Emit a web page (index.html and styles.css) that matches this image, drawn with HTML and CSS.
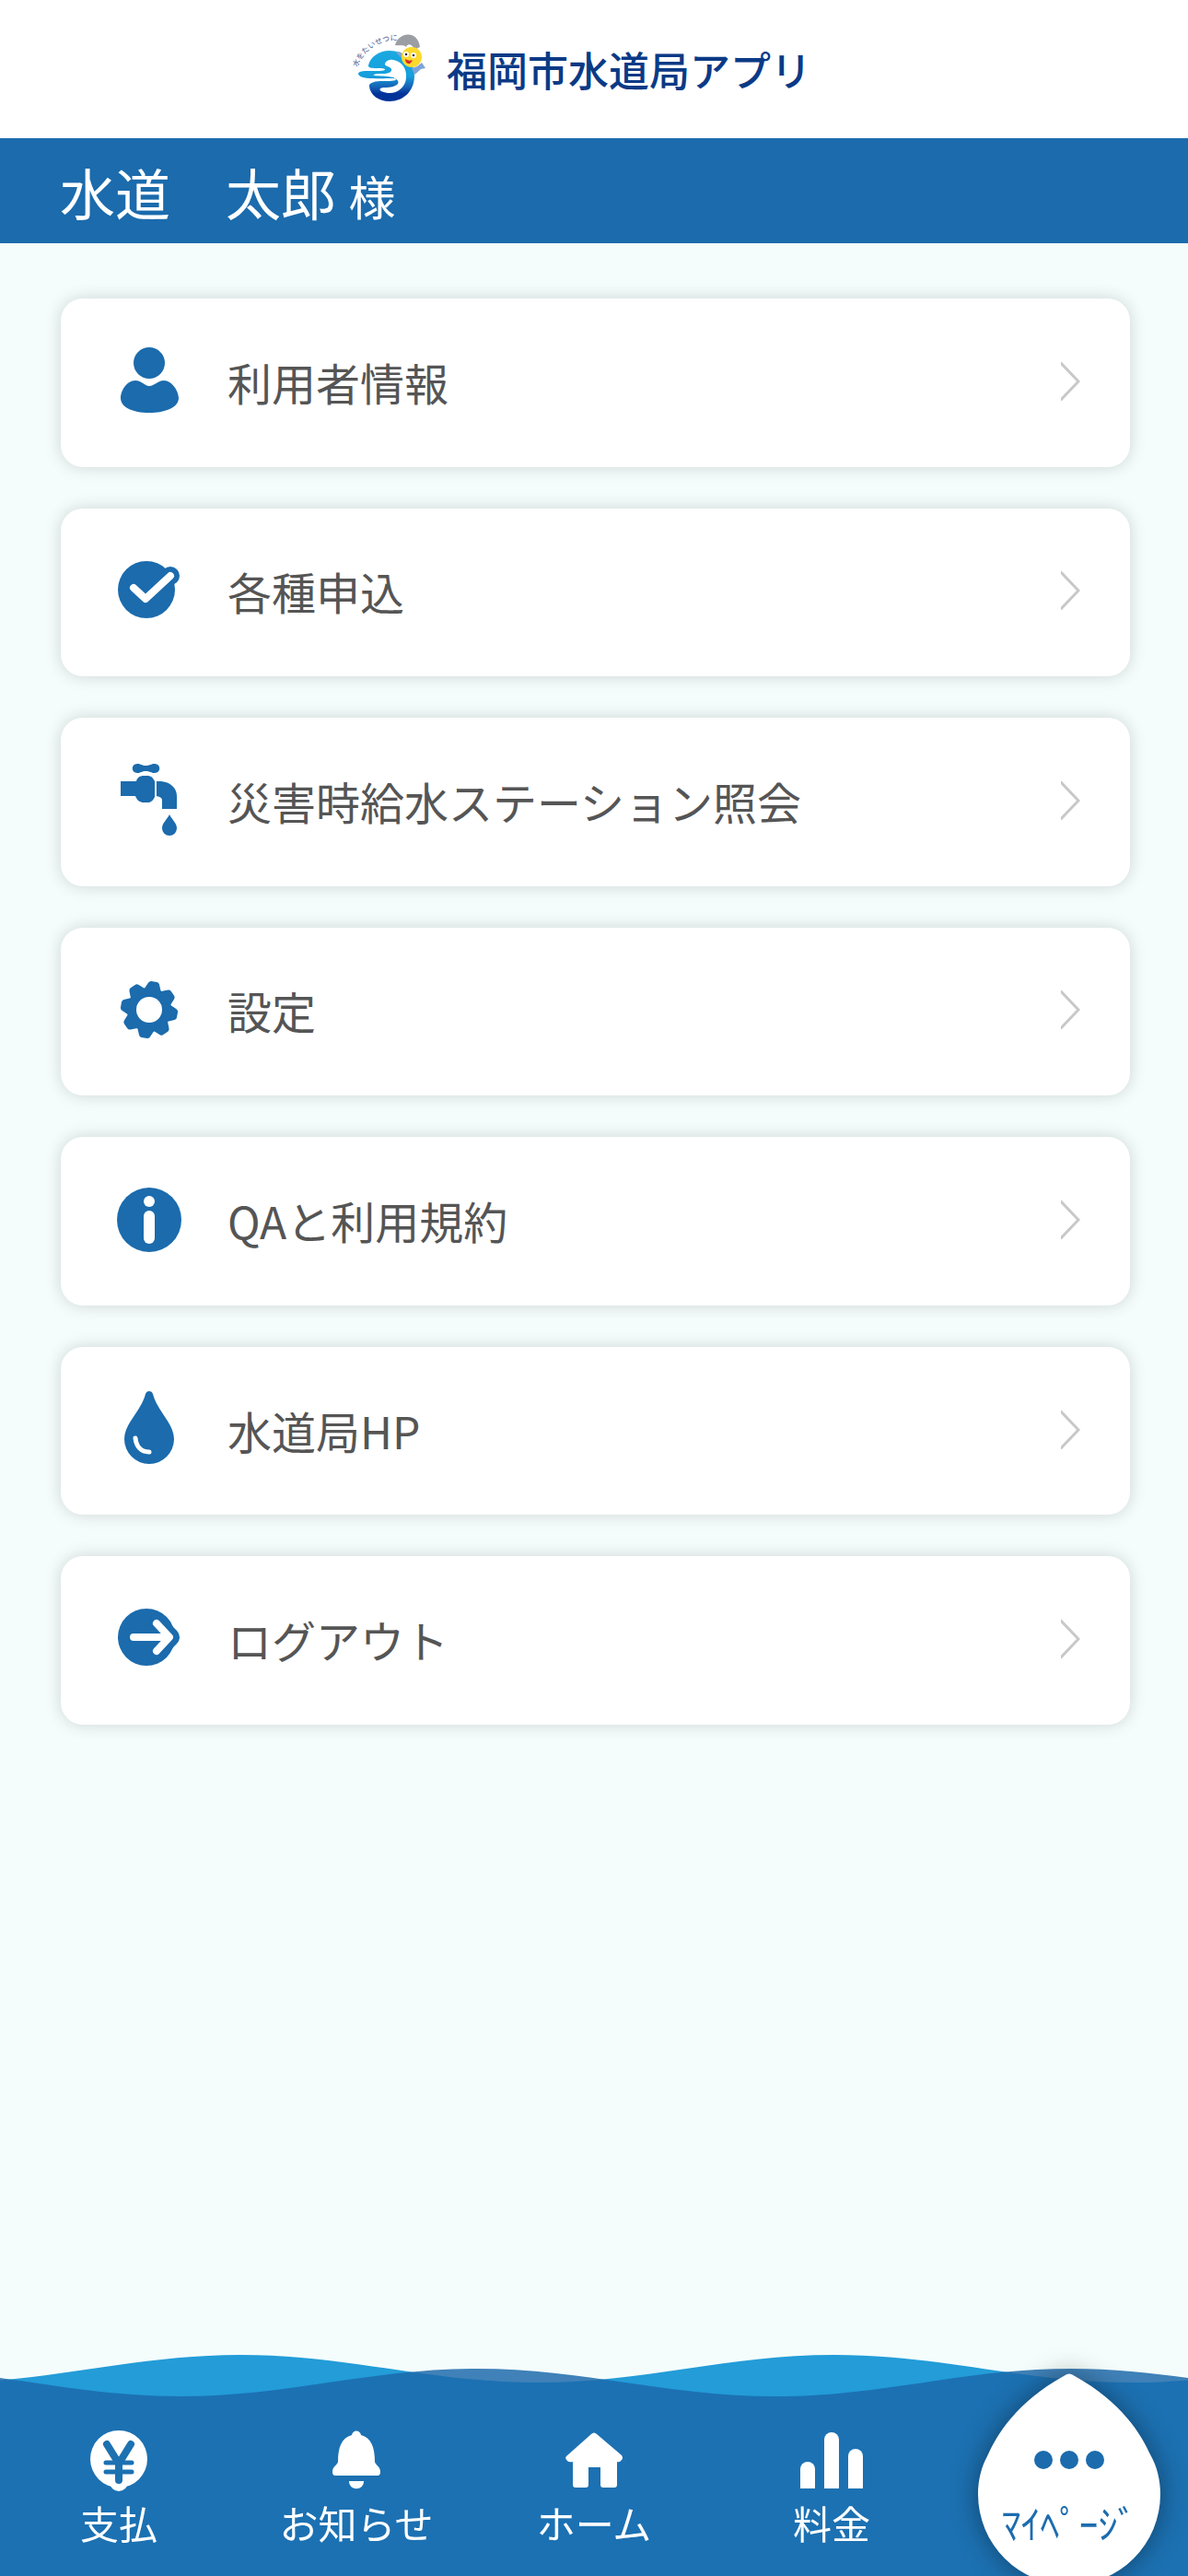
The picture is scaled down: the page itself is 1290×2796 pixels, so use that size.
FILE: index.html
```html
<!DOCTYPE html>
<html lang="ja">
<head>
    <meta charset="UTF-8">
    <meta name="viewport" content="width=device-width, initial-scale=1.0">
    <title>福岡市水道局アプリ</title>
    <link rel="stylesheet" href="styles.css">
</head>
<body>
    <header class="header">
        <svg class="logo" viewBox="0 -4 90 90" aria-hidden="true">
            <defs>
                <linearGradient id="ring" x1="0" y1="0" x2="0" y2="1">
                    <stop offset="0" stop-color="#1ba9e1"/>
                    <stop offset="0.5" stop-color="#159fdc"/>
                    <stop offset="0.72" stop-color="#1560b4"/>
                    <stop offset="0.85" stop-color="#003399"/>
                </linearGradient>
                <path id="arc" d="M7 39 A44 44 0 0 1 51 10"/>
            </defs>
            <text class="logo-text"><textPath href="#arc">水をたいせつに</textPath></text>
            <path fill="url(#ring)" d="M19 37 C21 28 30 21 42 21 C58 21 69 33 69 48 C69 65 57 76 42 76 C30 76 21 69 20 60 C19 55 28 54 34 54 C42 54 49 54 49 52 C49 50 35 52 24 51 C14 51 8 49 8 46 C8 42 20 43 30 43 C34 43 38 42 37 41 C35 39 18 42 19 37 Z"/>
            <path fill="#fff" d="M46 31 C56 33 61 41 60 51 C59 61 50 68 40 67 C34 66 30 64 32 62 C35 60 42 62 48 59 C53 57 53 53 46 50 C38 48 31 49 26 48 C22 47 27 46 34 46 C41 46 45 44 44 41 C43 38 36 38 37 35 C38 32 42 30 46 31 Z"/>
            <path fill="#9b9ea3" d="M48 15 C52 0 73 -1 75 17 L69 20 C67 14 62 12 60 17 C57 14 53 16 48 15 Z"/>
            <path fill="#7ea3d6" d="M49 23 Q52 20 57 25 L55 29 Z M66 40 L72 38 L77 34 L81 40 L76 41 Q72 45 69 47 Z"/>
            <circle cx="66" cy="28" r="11" fill="#fdd92c"/>
            <circle cx="60" cy="25" r="3" fill="#fff"/>
            <circle cx="68" cy="26" r="3" fill="#fff"/>
            <circle cx="60" cy="25" r="1.3" fill="#333"/>
            <circle cx="68" cy="26" r="1.3" fill="#333"/>
            <path fill="#d92b26" d="M59 30 Q63 33 67 31 Q65 36 62 35 Q59 34 59 30 Z"/>
        </svg>
        <h1>福岡市水道局アプリ</h1>
    </header>

    <p class="user-name">水道　太郎 <span>様</span></p>

    <main>
        <ul class="menu">
            <li>
                <a href="#">
                    <svg class="icon" viewBox="0 0 84 84" aria-hidden="true">
                        <circle cx="42" cy="22" r="17"/>
                        <path d="M42 47 C37 47 34 41 27 41 C17 41 11 53 11 60 C11 70 24 76 42 76 C60 76 74 70 74 60 C74 53 67 41 58 41 C51 41 48 47 42 47 Z"/>
                    </svg>
                    <span>利用者情報</span>
                    <svg class="arrow" viewBox="0 0 21 42" aria-hidden="true"><path d="M-1 0 L19 21 L-1 42"/></svg>
                </a>
            </li>
            <li>
                <a href="#">
                    <svg class="icon" viewBox="0 0 84 84" aria-hidden="true">
                        <circle cx="39" cy="41" r="31"/>
                        <circle cx="65" cy="26" r="10"/>
                        <path class="line" d="M25 39 L38 51 L65 26"/>
                    </svg>
                    <span>各種申込</span>
                    <svg class="arrow" viewBox="0 0 21 42" aria-hidden="true"><path d="M-1 0 L19 21 L-1 42"/></svg>
                </a>
            </li>
            <li>
                <a href="#">
                    <svg class="icon" viewBox="0 0 84 84" aria-hidden="true">
                        <path d="M29 2 C33 2 34 4 38 4 C43 4 44 2 48 2 C55 2 55 12 48 12 C44 12 43 10 38 10 C34 10 33 12 29 12 C22 12 22 2 29 2 Z"/>
                        <path d="M11 21 H28 C29 17 32 15 36 15 H40 C44 15 46 17 48 21 V38 C46 42 44 44 40 44 H36 C32 44 29 42 27 37 H11 Z"/>
                        <path d="M50 21 H55 C66 22 72 29 72 37 V51 H56 V42 C56 39 54 38 50 37 Z"/>
                        <path d="M64 57 C66 62 72 66 72 72 A8 8 0 0 1 56 72 C56 66 62 62 64 57 Z"/>
                    </svg>
                    <span>災害時給水ステーション照会</span>
                    <svg class="arrow" viewBox="0 0 21 42" aria-hidden="true"><path d="M-1 0 L19 21 L-1 42"/></svg>
                </a>
            </li>
            <li>
                <a href="#">
                    <svg class="icon" viewBox="0 0 84 84" aria-hidden="true">
                        <circle cx="42" cy="42" r="24"/>
                        <g transform="rotate(10 42 42)">
                            <path id="tooth" d="M33 20 L36 13 Q37 11 39 11 H45 Q47 11 48 13 L51 20 V64 L48 71 Q47 73 45 73 H39 Q37 73 36 71 L33 64 Z"/>
                            <use href="#tooth" transform="rotate(45 42 42)"/>
                            <use href="#tooth" transform="rotate(90 42 42)"/>
                            <use href="#tooth" transform="rotate(135 42 42)"/>
                        </g>
                        <circle cx="42" cy="42" r="14" fill="#fff"/>
                    </svg>
                    <span>設定</span>
                    <svg class="arrow" viewBox="0 0 21 42" aria-hidden="true"><path d="M-1 0 L19 21 L-1 42"/></svg>
                </a>
            </li>
            <li>
                <a href="#">
                    <svg class="icon" viewBox="0 0 84 84" aria-hidden="true">
                        <circle cx="42" cy="42" r="35"/>
                        <circle cx="42" cy="22" r="6" fill="#fff"/>
                        <rect x="36" y="32" width="12" height="36" rx="6" fill="#fff"/>
                    </svg>
                    <span>QAと利用規約</span>
                    <svg class="arrow" viewBox="0 0 21 42" aria-hidden="true"><path d="M-1 0 L19 21 L-1 42"/></svg>
                </a>
            </li>
            <li>
                <a href="#">
                    <svg class="icon" viewBox="0 0 84 84" aria-hidden="true">
                        <path d="M38 3 Q39 0 42 0 Q45 0 46 3 C51 22 69 35 69 52 A27 27 0 0 1 15 52 C15 35 33 22 38 3 Z"/>
                        <path class="line thin" d="M27 51 C28 60 33 66 42 66"/>
                    </svg>
                    <span>水道局HP</span>
                    <svg class="arrow" viewBox="0 0 21 42" aria-hidden="true"><path d="M-1 0 L19 21 L-1 42"/></svg>
                </a>
            </li>
            <li>
                <a href="#">
                    <svg class="icon" viewBox="0 0 84 84" aria-hidden="true">
                        <circle cx="39" cy="40" r="31"/>
                        <path class="edge" d="M50 25 L65 40 L50 55"/>
                        <path class="line" d="M25 40 H63 M50 25 L64 40 L50 55"/>
                    </svg>
                    <span>ログアウト</span>
                    <svg class="arrow" viewBox="0 0 21 42" aria-hidden="true"><path d="M-1 0 L19 21 L-1 42"/></svg>
                </a>
            </li>
        </ul>
    </main>

    <nav class="tab-bar">
        <svg class="waves" viewBox="0 0 1290 240" preserveAspectRatio="none" aria-hidden="true">
            <path fill="#239cd8" d="M-61 30 C56 30 144 0 261 0 S466 30 584 30 S788 0 906 0 S1111 30 1229 30 S1434 0 1551 0 V240 H-61 Z"/>
            <path fill="#1b69aa" fill-opacity="0.84" d="M-127 15 C-9 15 78 45 196 45 S401 15 518 15 S723 45 841 45 S1046 15 1163 15 S1368 45 1486 45 V240 H-127 Z"/>
        </svg>
        <ul>
            <li>
                <a href="#">
                    <svg class="tab-icon" viewBox="0 0 72 72" aria-hidden="true">
                        <circle cx="36" cy="35" r="31"/>
                        <circle cx="36" cy="60" r="10"/>
                        <path class="yen" d="M23 19 L36 40 L49 19 M36 40 V58"/>
                        <path class="yen bar" d="M22 39 H50 M22 49 H50"/>
                    </svg>
                    <span>支払</span>
                </a>
            </li>
            <li>
                <a href="#">
                    <svg class="tab-icon" viewBox="0 0 72 72" aria-hidden="true">
                        <path d="M31 9 C32 3 40 3 41 9 C52 12 56 22 56 38 C57 42 62 43 62 49 Q62 53 59 53 H13 Q10 53 10 49 C10 43 15 42 16 38 C16 22 20 12 31 9 Z"/>
                        <path d="M28 59 H44 C44 70 28 70 28 59 Z"/>
                    </svg>
                    <span>お知らせ</span>
                </a>
            </li>
            <li>
                <a href="#">
                    <svg class="tab-icon" viewBox="0 0 72 72" aria-hidden="true">
                        <path d="M33 8 Q36 5 39 8 L66 31 Q68 34 66 36 Q64 39 61 38 V63 Q61 66 58 66 H46 Q43 66 43 63 V44 H30 V63 Q30 66 27 66 H16 Q13 66 13 63 V38 Q9 39 7 37 Q4 34 6 32 Z"/>
                    </svg>
                    <span>ホーム</span>
                </a>
            </li>
            <li>
                <a href="#">
                    <svg class="tab-icon" viewBox="0 0 72 72" aria-hidden="true">
                        <path d="M2 67 V46 A8 8 0 0 1 18 46 V67 Z"/>
                        <path d="M28 67 V14 A8 8 0 0 1 44 14 V67 Z"/>
                        <path d="M54 67 V32 A8 8 0 0 1 70 32 V67 Z"/>
                    </svg>
                    <span>料金</span>
                </a>
            </li>
            <li class="current">
                <svg class="drop" viewBox="0 0 200 230" aria-hidden="true">
                    <path d="M94 3 Q100 -2 106 3 C158 32 178 66 189 90 C195 101 199 115 199 131 A99 99 0 0 1 1 131 C1 115 5 101 11 90 C22 66 42 32 94 3 Z"/>
                </svg>
                <a href="#" aria-current="page">
                    <svg class="tab-icon" viewBox="0 0 72 72" aria-hidden="true">
                        <circle cx="8" cy="36" r="10"/>
                        <circle cx="36" cy="36" r="10"/>
                        <circle cx="64" cy="36" r="10"/>
                    </svg>
                    <span>ﾏｲﾍﾟｰｼﾞ</span>
                </a>
            </li>
        </ul>
    </nav>
</body>
</html>
```
FILE: styles.css
```css
* {
    box-sizing: border-box;
    margin: 0;
    padding: 0;
}
body {
    font-family: "Noto Sans CJK JP", sans-serif;
    background-color: #f4fdfc;
    color: #555;
    min-height: 100vh;
    padding-bottom: 240px;
}
ul {
    list-style: none;
}
a {
    color: inherit;
    text-decoration: none;
}
.header {
    display: flex;
    align-items: center;
    justify-content: center;
    height: 150px;
    gap: 14px;
    padding-right: 28px;
    background-color: #fff;
}
.logo {
    width: 90px;
    height: 90px;
    overflow: visible;
}
.logo-text {
    font-size: 8px;
    fill: #4a5f95;
}
.header h1 {
    font-size: 44px;
    font-weight: 500;
    line-height: 60px;
    color: #0b3a86;
}
.user-name {
    height: 114px;
    padding: 0 65px;
    font-size: 60px;
    line-height: 116px;
    color: #fff;
    background-color: #1b6bad;
}
.user-name span {
    font-size: 51px;
}
main {
    padding: 60px 63px 60px 66px;
}
.menu {
    display: grid;
    grid-auto-rows: 1fr;
    row-gap: 45px;
    min-height: 1548px;
}
.menu a {
    display: flex;
    align-items: center;
    height: 100%;
    padding: 0 54px 3px;
    gap: 43px;
    font-size: 48px;
    line-height: 72px;
    background-color: #fff;
    border-radius: 24px;
    box-shadow: 0 0 18px rgba(0, 0, 0, 0.16);
}
.menu span {
    flex: 1;
}
.icon {
    width: 84px;
    height: 84px;
    fill: #1b6bad;
}
.icon .line {
    fill: none;
    stroke: #fff;
    stroke-width: 8;
    stroke-linecap: round;
    stroke-linejoin: round;
}
.icon .thin {
    stroke-width: 5;
}
.icon .edge {
    fill: none;
    stroke: #1b6bad;
    stroke-width: 20;
    stroke-linecap: round;
    stroke-linejoin: round;
}
.arrow {
    width: 21px;
    height: 42px;
    fill: none;
    stroke: #c8c8c8;
    stroke-width: 3;
}
.tab-bar {
    position: fixed;
    left: 0;
    right: 0;
    bottom: 0;
    height: 240px;
}
.waves {
    position: absolute;
    width: 100%;
    height: 100%;
}
.tab-bar ul {
    display: grid;
    grid-template-columns: repeat(5, 1fr);
}
.tab-bar li {
    position: relative;
}
.tab-bar a {
    position: relative;
    display: flex;
    flex-direction: column;
    align-items: center;
    gap: 8px;
    padding-top: 78px;
    font-size: 42px;
    line-height: 48px;
    color: #fff;
}
.tab-icon {
    width: 72px;
    height: 72px;
    fill: #fff;
    overflow: visible;
}
.yen {
    fill: none;
    stroke: #1c71b1;
    stroke-width: 8;
    stroke-linecap: round;
    stroke-linejoin: round;
}
.yen.bar {
    stroke-width: 5;
}
.tab-bar .current a {
    color: #1c6cae;
}
.current .tab-icon {
    fill: #1b6bad;
}
.drop {
    position: absolute;
    top: 20px;
    left: 50%;
    width: 200px;
    height: 230px;
    margin-left: -100px;
    fill: #fff;
    overflow: visible;
    filter: drop-shadow(0 0 15px rgba(0, 0, 0, 0.4));
}
```
